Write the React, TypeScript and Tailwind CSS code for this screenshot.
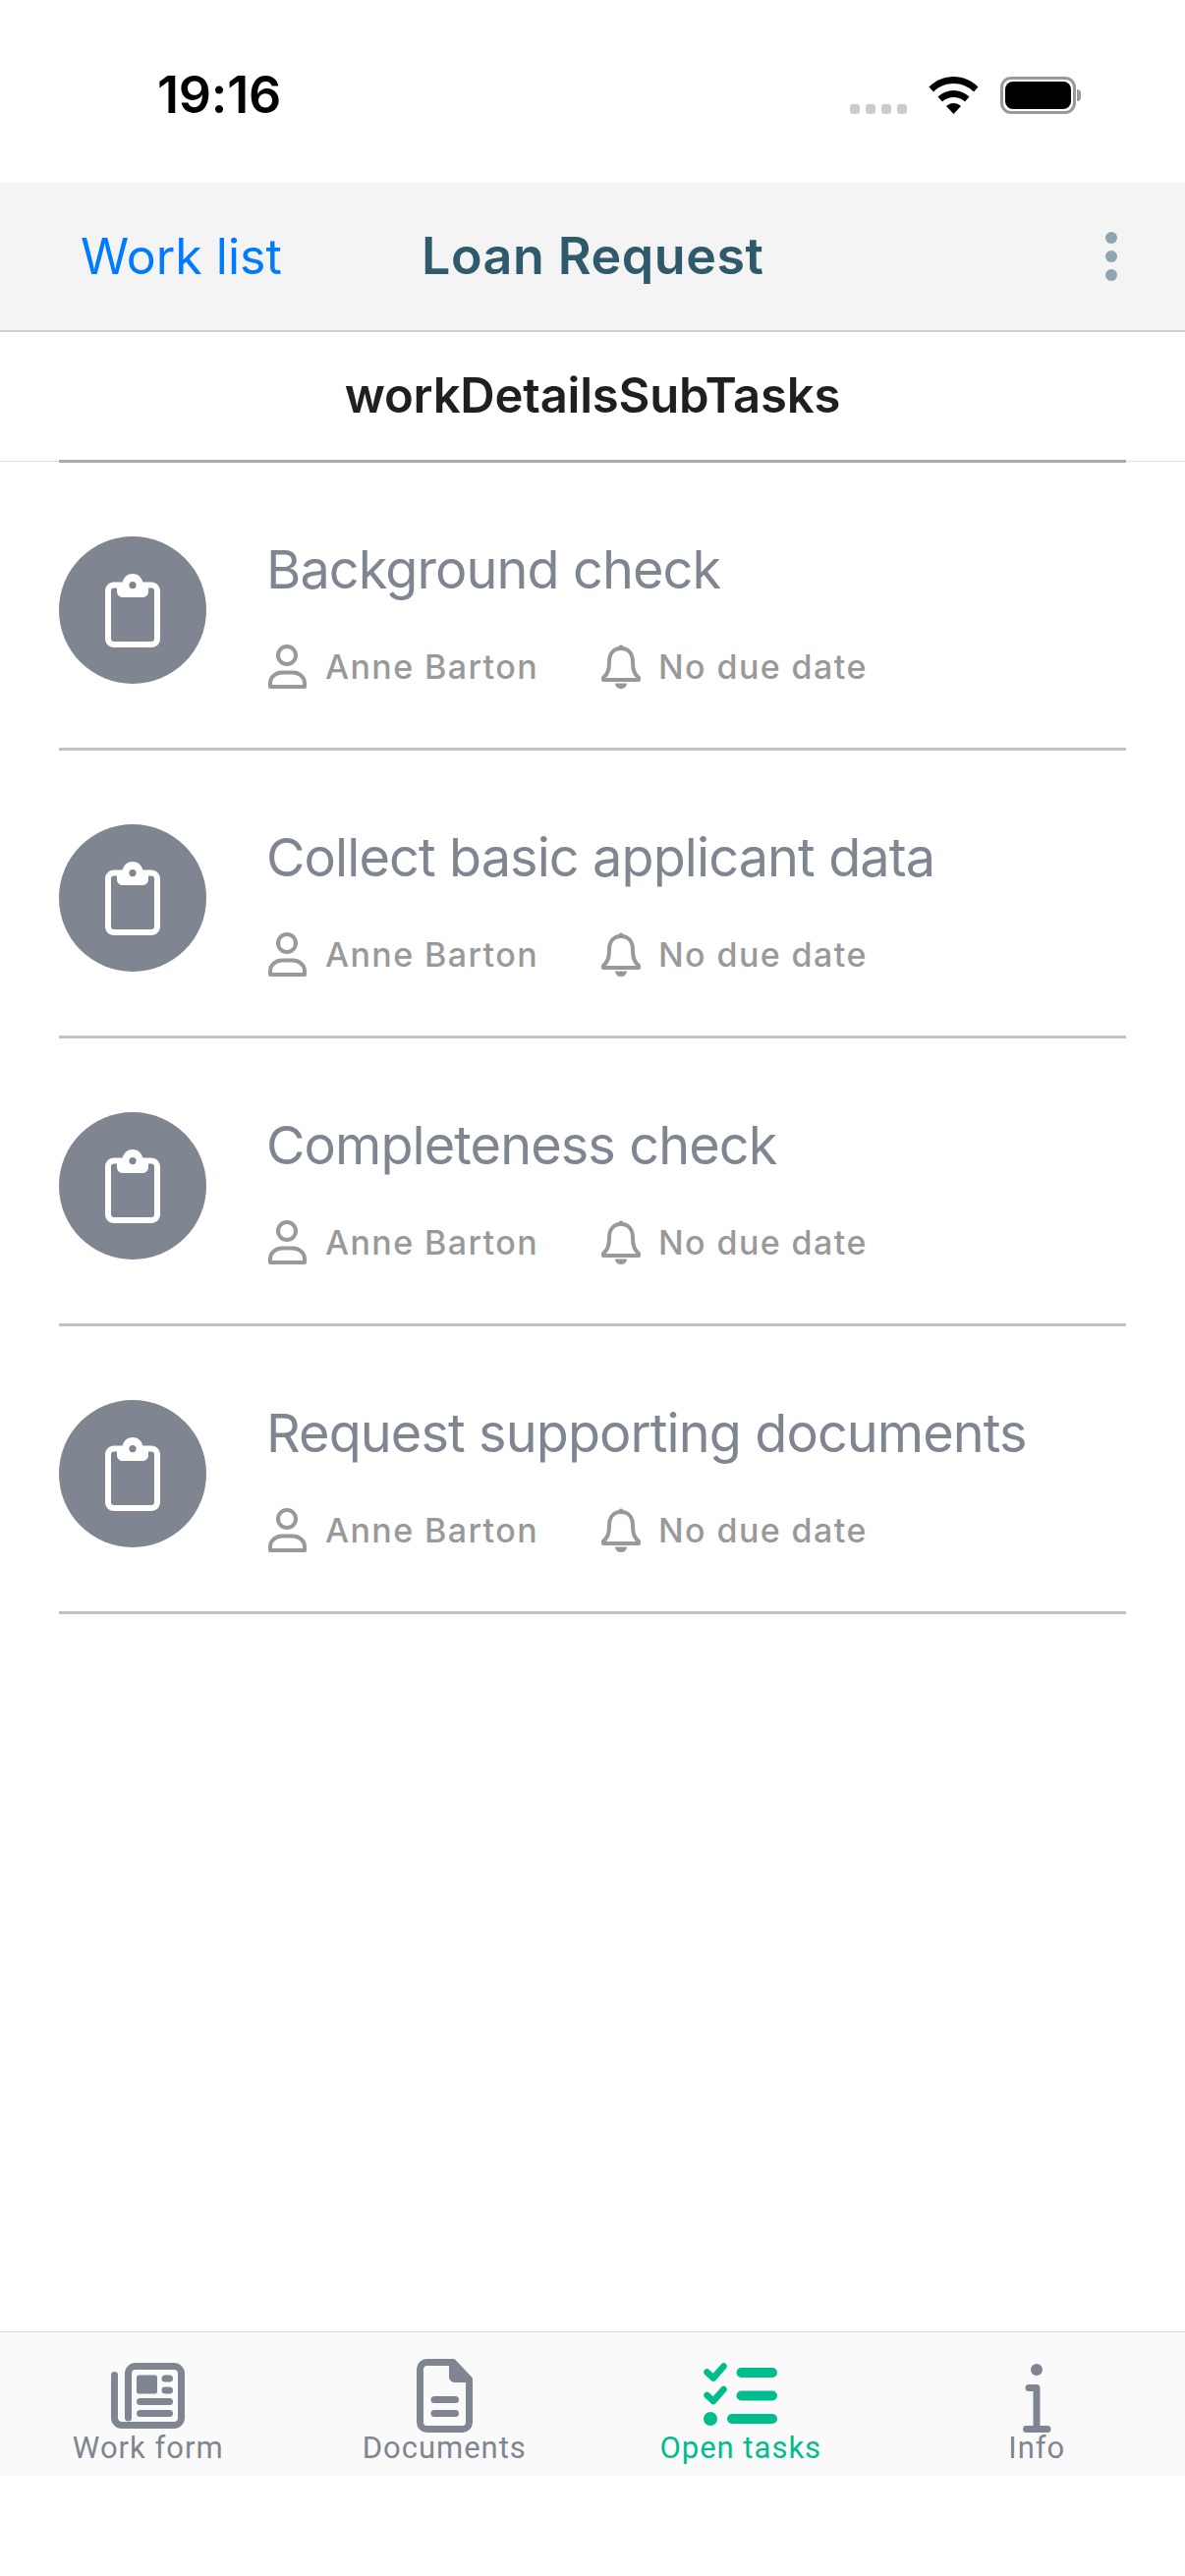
const tasks = [
  "Background check",
  "Collect basic applicant data",
  "Completeness check",
  "Request supporting documents",
];

function ClipboardIcon() {
  return (
    <svg width="56" height="75" viewBox="0 0 56 75" fill="none">
      <path
        fillRule="evenodd"
        clipRule="evenodd"
        fill="#ffffff"
        d="M28 0c5 0 9 3.400 10.400 8.500H47c5 0 9 4 9 9V66c0 5-4 9-9 9H9c-5 0-9-4-9-9V17.500c0-5 4-9 9-9h8.600C19 3.400 23 0 28 0Zm0 8a3.600 3.600 0 1 0 0 7.200A3.600 3.600 0 0 0 28 8ZM12 14.600H9a3 3 0 0 0-3 3V66a3 3 0 0 0 3 3h38a3 3 0 0 0 3-3V17.600a3 3 0 0 0-3-3h-3V18c0 3.500-2.500 6-6 6H18c-3.500 0-6-2.500-6-6v-3.400Z"
      />
    </svg>
  );
}

function PersonIcon() {
  return (
    <svg width="39" height="45" viewBox="0 0 39 45" fill="none" stroke="#999999" strokeWidth="4">
      <circle cx="19" cy="11" r="9" />
      <path d="M2 43V39C2 33 8 28.500 14 28.500H25C31 28.500 37 33 37 39V43Z" strokeLinejoin="round" />
    </svg>
  );
}

function BellIcon() {
  return (
    <svg width="40" height="45" viewBox="0 0 40 45" fill="none" stroke="#999999" strokeWidth="4">
      <path
        d="M20 4C11 4 8 11 8 18C8 27 6 30 2 34V36H38V34C34 30 32 27 32 18C32 11 29 4 20 4Z"
        strokeLinejoin="round"
      />
      <circle cx="20" cy="3" r="2.500" fill="#999999" stroke="none" />
      <path d="M14 39.500H26C26 43 23 45 20 45C17 45 14 43 14 39.500Z" fill="#999999" stroke="none" />
    </svg>
  );
}

function WorkFormIcon() {
  return (
    <svg width="75" height="67" viewBox="0 0 75 67" fill="#7f8691">
      <path
        d="M17.500 56V11A7.500 7.500 0 0 1 25 3.500H64A7.500 7.500 0 0 1 71.500 11V56A7.500 7.500 0 0 1 64 63.500H11A7.500 7.500 0 0 1 3.500 56V12.500"
        fill="none"
        stroke="#7f8691"
        strokeWidth="7"
        strokeLinecap="round"
      />
      <rect x="26" y="12.500" width="21" height="19" rx="2.500" />
      <rect x="51.500" y="12.500" width="11.500" height="7" rx="3.500" />
      <rect x="51.500" y="24.500" width="11.500" height="7" rx="3.500" />
      <rect x="26" y="36" width="37" height="7" rx="3.500" />
      <rect x="26" y="48" width="37" height="7" rx="3.500" />
    </svg>
  );
}

function DocumentIcon() {
  return (
    <svg width="57" height="75" viewBox="0 0 57 75" fill="#7f8691">
      <path
        d="M10.500 3.500H37L53.500 21V64.500A7 7 0 0 1 46.500 71.500H10.500A7 7 0 0 1 3.500 64.500V10.500A7 7 0 0 1 10.500 3.500Z"
        fill="none"
        stroke="#7f8691"
        strokeWidth="7"
        strokeLinejoin="round"
      />
      <path d="M33 3V18C33 21.500 35.500 24 39 24H54V19L38 2Z" />
      <rect x="14.500" y="38" width="28.500" height="7" rx="3.500" />
      <rect x="14.500" y="52" width="28.500" height="7" rx="3.500" />
    </svg>
  );
}

function OpenTasksIcon() {
  return (
    <svg className="-mt-[3px]" width="75" height="64" viewBox="0 0 75 64" fill="#00bd8e">
      <path
        d="M3.500 9.500L10 15.500L20.500 3.500M3.500 33L10 39L20.500 27"
        fill="none"
        stroke="#00bd8e"
        strokeWidth="6.500"
        strokeLinecap="round"
        strokeLinejoin="round"
      />
      <rect x="33.500" y="5" width="41.500" height="10" rx="5" />
      <rect x="33.500" y="28.500" width="41.500" height="10" rx="5" />
      <rect x="24" y="52" width="51" height="10" rx="5" />
      <ellipse cx="7" cy="57" rx="7" ry="7" />
    </svg>
  );
}

function InfoIcon() {
  return (
    <svg className="mt-[5px]" width="29" height="70" viewBox="0 0 29 70" fill="#7f8691">
      <circle cx="14" cy="6" r="6" />
      <path
        d="M6 24.500H14V66M3.500 66.500H25"
        fill="none"
        stroke="#7f8691"
        strokeWidth="7"
        strokeLinecap="round"
        strokeLinejoin="round"
      />
    </svg>
  );
}

const tabs = [
  { label: "Work form", icon: <WorkFormIcon />, active: false },
  { label: "Documents", icon: <DocumentIcon />, active: false },
  { label: "Open tasks", icon: <OpenTasksIcon />, active: true },
  { label: "Info", icon: <InfoIcon />, active: false },
];

export default function App() {
  return (
    <div className="flex h-[2622px] w-[1206px] flex-col bg-white font-['Inter',sans-serif]">
      {/* status bar */}
      <div className="flex h-[186px] items-start justify-between pr-[106px] pl-[160px]">
        <span className="mt-[66px] text-[52px] leading-[62px] font-semibold tracking-[-0.2px] text-black">
          19:16
        </span>
        <div className="mt-[78px] flex items-end gap-[22px]">
          <div className="flex gap-[6px]">
            {[0, 1, 2, 3].map((dot) => (
              <span key={dot} className="h-[10px] w-[10px] rounded-[3px] bg-[#cccccc]" />
            ))}
          </div>
          <svg width="51" height="38" viewBox="0 0 50 38" fill="black">
            <path d="M25 0C15.500 0 7 3.500 0 10.500L4.500 15.500C10 10 17 7 25 7C33 7 40 10 45.500 15.500L50 10.500C43 3.500 34.500 0 25 0Z" />
            <path d="M25 14C19 14 13.500 16.300 9 20.500L13.500 25.500C16.500 22.500 20.500 21 25 21C29.500 21 33.500 22.500 36.500 25.500L41 20.500C36.500 16.300 31 14 25 14Z" />
            <path d="M25 27C22.500 27 19.800 28 17.500 30L25 38L32.500 30C30.200 28 27.500 27 25 27Z" />
          </svg>
          <div className="flex items-center">
            <div className="flex h-[38px] w-[77px] items-center justify-center rounded-[11px] border-[3px] border-[#999999]">
              <div className="h-[28px] w-[67px] rounded-[8px] bg-black" />
            </div>
            <div className="ml-[1px] h-[12px] w-[4px] rounded-r-full bg-[#999999]" />
          </div>
        </div>
      </div>

      {/* nav bar */}
      <div className="flex h-[152px] items-center justify-between border-b-[2px] border-[#cfcfcf] bg-[#f4f4f4] pr-[69px] pl-[82px]">
        <div className="flex items-center">
          <span className="w-[347px] text-[50px] text-[#007aff]">Work list</span>
          <span className="text-[52px] font-semibold tracking-[0.5px] text-[#2e5a6b]">Loan Request</span>
        </div>
        <div className="flex flex-col gap-[7px]">
          {[0, 1, 2].map((dot) => (
            <span key={dot} className="h-[12px] w-[12px] rounded-full bg-[#8fa5b0]" />
          ))}
        </div>
      </div>

      {/* sub header */}
      <div className="flex h-[132px] items-center justify-center border-b-[1px] border-[#e0e0e0] pb-[2px]">
        <span className="text-[49px] font-semibold tracking-[-0.2px] text-[#1f1f1f]">workDetailsSubTasks</span>
      </div>

      {/* task list */}
      <div className="-mt-[2px] flex-1 px-[60px]">
        <div className="border-t-[3px] border-[#aaaaaa]" />
        {tasks.map((task) => (
          <div key={task} className="flex h-[293px] gap-[61px] border-b-[3px] border-[#c2c2c2] pt-[75px]">
            <div className="flex h-[150px] w-[150px] shrink-0 items-center justify-center rounded-full bg-[#7f8691]">
              <ClipboardIcon />
            </div>
            <div className="flex flex-col">
              <span className="text-[54px] leading-[68px] tracking-[-0.9px] text-[#7f8691]">{task}</span>
              <div className="mt-[39px] ml-[2px] flex items-center">
                <PersonIcon />
                <span className="ml-[19px] w-[281px] text-[34px] font-medium tracking-[1.4px] text-[#999999]">
                  Anne Barton
                </span>
                <BellIcon />
                <span className="ml-[18px] text-[34px] font-medium tracking-[1.4px] text-[#999999]">No due date</span>
              </div>
            </div>
          </div>
        ))}
      </div>

      {/* tab bar */}
      <div className="grid h-[147px] grid-cols-4 border-t-[1px] border-[#d9d9d9] bg-[#fafafa] font-['Roboto',sans-serif]">
        {tabs.map((tab) => (
          <div key={tab.label} className="flex flex-col items-center">
            <div className="mt-[27px] flex h-[75px] items-center">{tab.icon}</div>
            <span
              className={`-mt-[2px] text-[31px] leading-[36px] tracking-[1px] ${
                tab.active ? "text-[#00bd8e]" : "text-[#7f8691]"
              }`}
            >
              {tab.label}
            </span>
          </div>
        ))}
      </div>
      <div className="h-[102px]" />
    </div>
  );
}
